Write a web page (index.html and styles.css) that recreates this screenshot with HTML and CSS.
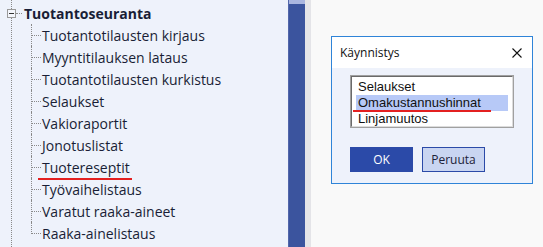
FILE: index.html
```html
<!DOCTYPE html>
<html lang="fi">
<head>
  <meta charset="UTF-8">
  <title>Tuotantoseuranta</title>
  <link rel="stylesheet" href="styles.css">
</head>
<body>
  <div class="tree">
    <div class="node">
      <div class="node-row">
        <span class="toggle"><span class="minus"></span></span>
        <span class="root-branch"></span>
        <span class="root-label">Tuotantoseuranta</span>
      </div>
      <ul class="children">
        <li><span class="branch"></span><span class="label">Tuotantotilausten kirjaus</span></li>
        <li><span class="branch"></span><span class="label">Myyntitilauksen lataus</span></li>
        <li><span class="branch"></span><span class="label">Tuotantotilausten kurkistus</span></li>
        <li><span class="branch"></span><span class="label">Selaukset</span></li>
        <li><span class="branch"></span><span class="label">Vakioraportit</span></li>
        <li><span class="branch"></span><span class="label">Jonotuslistat</span></li>
        <li><span class="branch"></span><span class="label marked">Tuotereseptit</span></li>
        <li><span class="branch"></span><span class="label">Työvaihelistaus</span></li>
        <li><span class="branch"></span><span class="label">Varatut raaka-aineet</span></li>
        <li><span class="branch"></span><span class="label">Raaka-ainelistaus</span></li>
      </ul>
    </div>
  </div>
  <div class="scrollbar"><div class="scroll-top"></div></div>
  <div class="gutter"></div>

  <div class="workspace">
    <div class="dialog">
      <div class="dialog-title">
        <span>Käynnistys</span>
        <svg class="close" width="10" height="10" viewBox="0 0 10 10">
          <path d="M0.5 0.5 L9.5 9.5 M9.5 0.5 L0.5 9.5" stroke="#111" stroke-width="1.1" fill="none"/>
        </svg>
      </div>
      <div class="dialog-body">
        <div class="listbox">
          <div class="listbox-inner">
            <div class="list-item">Selaukset</div>
            <div class="list-item selected"><span class="marked-red">Omakustannushinnat</span></div>
            <div class="list-item">Linjamuutos</div>
          </div>
        </div>
        <div class="buttons">
          <button class="btn btn-primary">OK</button>
          <button class="btn btn-secondary">Peruuta</button>
        </div>
      </div>
    </div>
  </div>
</body>
</html>
```

FILE: styles.css
```css
html, body {
  margin: 0;
  padding: 0;
  height: 247px;
  overflow: hidden;
}

body {
  display: flex;
  font-family: "Open Sans", "Noto Sans", sans-serif;
  background-color: #f9f9f9;
}

/* tree panel */
.tree {
  width: 277px;
  padding-left: 11px;
  padding-top: 2px;
  background-color: #eef2fb;
  color: #191e36;
}

.node {
  border-left: 1px dotted #8a8a8a;
  height: 100%;
  margin-top: -2px;
  padding-top: 2px;
}

.node-row {
  display: flex;
  align-items: center;
  height: 22px;
}

.toggle {
  width: 7px;
  height: 7px;
  margin-left: -5px;
  border: 1px solid #9a9a9a;
  background-color: #f4f6fc;
  display: flex;
  align-items: center;
  justify-content: center;
}

.minus {
  width: 5px;
  height: 1px;
  background-color: #333;
}

.root-branch {
  width: 6px;
  border-top: 1px dotted #8a8a8a;
  margin-right: 2px;
}

.root-label {
  font-weight: bold;
  font-size: 14px;
}

.children {
  list-style: none;
  margin: 0 0 0 19px;
  padding: 0;
}

.children li {
  display: flex;
  align-items: center;
  height: 22px;
  border-left: 1px dotted #8a8a8a;
  font-size: 14px;
}

.branch {
  width: 9px;
  border-top: 1px dotted #8a8a8a;
  margin-right: 1px;
}

.children li:last-child {
  border-left-color: transparent;
}

.children li:last-child .branch {
  align-self: flex-start;
  height: 11px;
  border-top: none;
  border-left: 1px dotted #8a8a8a;
  border-bottom: 1px dotted #8a8a8a;
  margin-left: -1px;
}

.label.marked {
  border-bottom: 2px solid #e32020;
  padding: 0 2px 1px 0;
  margin-left: -4px;
  padding-left: 4px;
  margin-bottom: -3px;
}

/* scrollbar */
.scrollbar {
  width: 17px;
  background-color: #3b549e;
  border-left: 1px solid #5266aa;
  box-sizing: border-box;
}

.scroll-top {
  height: 4px;
  background-color: #aab6e0;
}

.gutter {
  width: 6px;
  background-color: #e4e4e8;
}

/* dialog */
.workspace {
  flex: 1;
  padding: 36px 0 0 20px;
}

.dialog {
  width: 200px;
  height: 146px;
  border: 1px solid #2f84d8;
  background-color: #eef2fb;
  display: flex;
  flex-direction: column;
}

.dialog-title {
  height: 31px;
  background-color: #fff;
  display: flex;
  align-items: center;
  justify-content: space-between;
  padding: 0 10px 0 8px;
  font-size: 12px;
  color: #111;
}

.dialog-body {
  padding: 7px 0 0 18px;
}

.listbox {
  width: 162px;
  height: 51px;
  border: 1px solid #a0a0a0;
  padding: 0;
  background-color: #fff;
}

.listbox-inner {
  height: 47px;
  border: 1px solid #6a6a6a;
  border-right-color: #dcdcdc;
  border-bottom-color: #dcdcdc;
  padding: 2px 4px 0 4px;
  font-family: "Liberation Sans", Arial, sans-serif;
  font-size: 13px;
  color: #111;
}

.list-item {
  height: 16px;
  line-height: 16px;
  padding-left: 2px;
}

.list-item.selected {
  background-color: #b7c9f7;
}

.marked-red {
  display: inline-block;
  line-height: 14px;
  border-bottom: 2px solid #e32020;
  margin-left: -5px;
  padding-left: 5px;
  padding-right: 10px;
}

.buttons {
  display: flex;
  gap: 9px;
  margin-top: 19px;
}

.btn {
  width: 63px;
  height: 25px;
  font-family: "Open Sans", "Noto Sans", sans-serif;
  font-size: 12px;
  border-radius: 0;
  padding: 0;
  cursor: pointer;
}

.btn-primary {
  background-color: #2b4aa8;
  border: 1px solid #2b4aa8;
  color: #fff;
}

.btn-secondary {
  background-color: #c9d5f1;
  border: 1px solid #2b4aa8;
  color: #1c2138;
}
```
